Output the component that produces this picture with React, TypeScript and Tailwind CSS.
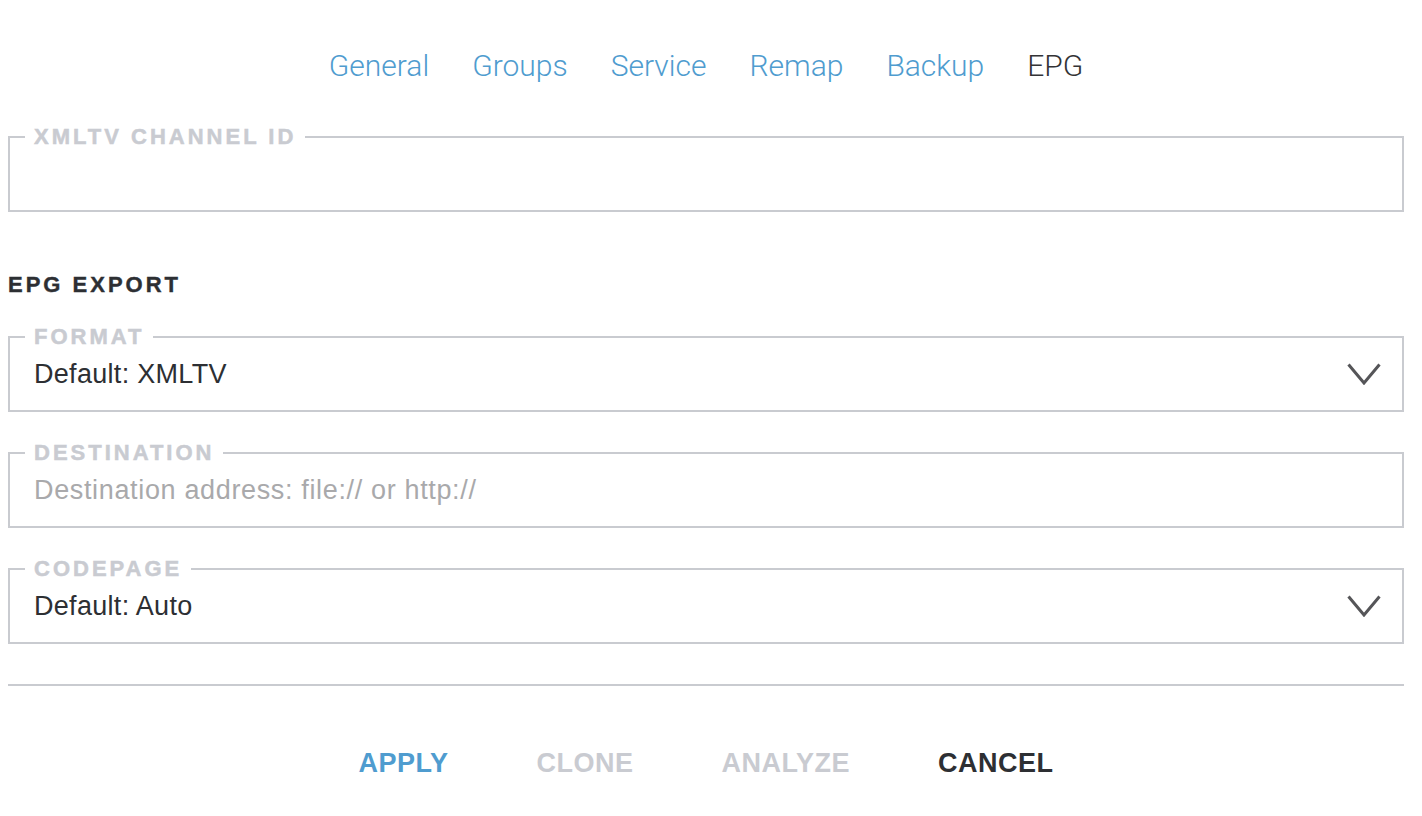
import React from "react";

const tabs = ["General", "Groups", "Service", "Remap", "Backup", "EPG"];

function Chevron() {
  return (
    <svg width="34" height="22" viewBox="0 0 34 22" fill="none" className="shrink-0">
      <polyline points="1.5,1.5 17,20 32.5,1.5" stroke="#555558" strokeWidth="3" strokeLinejoin="miter" strokeLinecap="butt" />
    </svg>
  );
}

function Field({ label, children }: { label: string; children: React.ReactNode }) {
  return (
    <fieldset className="border-2 border-[#c9cbd0] pl-[15px] pr-[21px] pt-[11px] pb-[20px]">
      <legend className="px-[9px] text-[22px] leading-[21px] font-bold tracking-[3px] text-[#c9cbd1] [-webkit-text-stroke:0.5px_#c9cbd1]">
        {label}
      </legend>
      <div className="pl-[9px] h-[32px] flex items-center justify-between">{children}</div>
    </fieldset>
  );
}

export default function App() {
  return (
    <div className="min-h-screen bg-white" style={{ fontFamily: '"Liberation Sans", Arial, sans-serif' }}>
      <div className="ml-[8px] w-[1396px] pt-[48px]">
        <nav className="flex justify-center gap-[43px] h-[36px] text-[30px] leading-[36px] font-light" style={{ fontFamily: 'Roboto, "Liberation Sans", sans-serif' }}>
          {tabs.map((t) => (
            <span key={t} className={t === "EPG" ? "text-[#333336]" : "text-[#4f9ccf]"}>
              {t}
            </span>
          ))}
        </nav>

        <div className="mt-[42px]">
          <Field label="XMLTV CHANNEL ID">
            <span className="text-[27px] leading-[32px]">&nbsp;</span>
          </Field>
        </div>

        <h2 className="mt-[62px] mb-[31px] text-[22px] leading-[21px] font-bold tracking-[3px] text-[#2d2f33] [-webkit-text-stroke:0.4px_#2d2f33]">
          EPG EXPORT
        </h2>

        <div className="flex flex-col gap-[30px]">
          <Field label="FORMAT">
            <span className="text-[27px] leading-[32px] tracking-[0.3px] text-[#2d2f33]">Default: XMLTV</span>
            <Chevron />
          </Field>
          <Field label="DESTINATION">
            <span className="text-[27px] leading-[32px] tracking-[0.65px] text-[#a9a9ab]">Destination address: file:// or http://</span>
          </Field>
          <Field label="CODEPAGE">
            <span className="text-[27px] leading-[32px] tracking-[0.3px] text-[#2d2f33]">Default: Auto</span>
            <Chevron />
          </Field>
        </div>

        <div className="mt-[40px] h-[2px] bg-[#c9cbd0]" />

        <div className="mt-[64px] flex justify-center gap-[88px] text-[27px] leading-[27px] font-bold tracking-[0.5px]">
          <span className="text-[#4f9ccf]">APPLY</span>
          <span className="text-[#c9cbd1]">CLONE</span>
          <span className="text-[#c9cbd1]">ANALYZE</span>
          <span className="text-[#2d2f33]">CANCEL</span>
        </div>
      </div>
    </div>
  );
}
